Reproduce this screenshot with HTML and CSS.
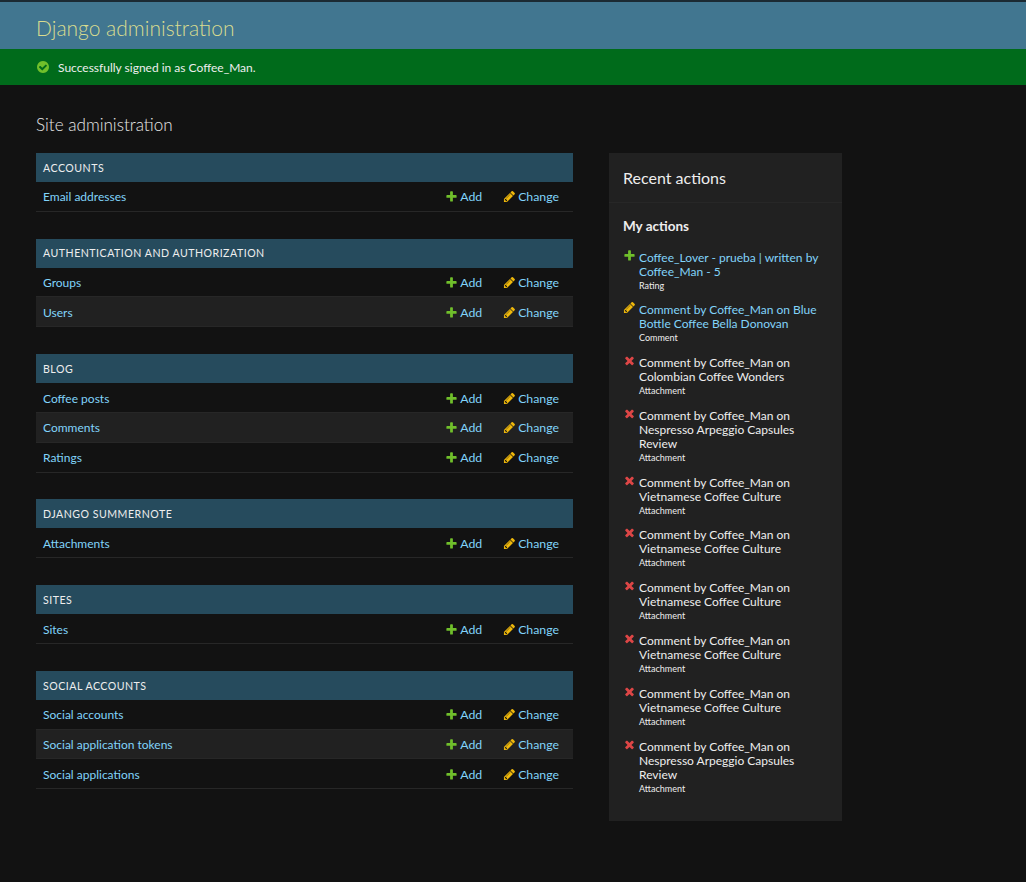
FILE: index.html
```html
<!DOCTYPE html>
<html lang="en">
<head>
    <meta charset="UTF-8">
    <meta name="viewport" content="width=device-width, initial-scale=1.0">
    <title>Site administration</title>
    <link rel="stylesheet" href="styles.css">
</head>
<body>
  <svg class="iconDefs" xmlns="http://www.w3.org/2000/svg">
    <symbol id="iconAdd" viewBox="0 0 1792 1792"><path d="M1600 796v192q0 40-28 68t-68 28h-416v416q0 40-28 68t-68 28h-192q-40 0-68-28t-28-68v-416h-416q-40 0-68-28t-28-68v-192q0-40 28-68t68-28h416v-416q0-40 28-68t68-28h192q40 0 68 28t28 68v416h416q40 0 68 28t28 68z"/></symbol>
    <symbol id="iconChange" viewBox="0 0 1792 1792"><path d="M491 1536l91-91-235-235-91 91v107h128v128h107zm523-928q0-22-22-22-10 0-17 7l-542 542q-7 7-7 17 0 22 22 22 10 0 17-7l542-542q7-7 7-17zm-54-192l416 416-832 832h-416v-416zm683 96q0 53-37 90l-166 166-416-416 166-165q36-38 90-38 53 0 91 38l235 234q37 39 37 91z"/></symbol>
    <symbol id="iconDelete" viewBox="0 0 1792 1792"><path d="M1490 1322q0 40-28 68l-136 136q-28 28-68 28t-68-28l-294-294-294 294q-28 28-68 28t-68-28l-136-136q-28-28-28-68t28-68l294-294-294-294q-28-28-28-68t28-68l136-136q28-28 68-28t68 28l294 294 294-294q28-28 68-28t68 28l136 136q28 28 28 68t-28 68l-294 294 294 294q28 28 28 68z"/></symbol>
    <symbol id="iconOk" viewBox="0 0 1792 1792"><path d="M1412 734q0-28-18-46l-91-90q-19-19-45-19t-45 19l-408 407-226-226q-19-19-45-19t-45 19l-91 90q-18 18-18 46 0 27 18 45l362 362q19 19 45 19 27 0 46-19l543-543q18-18 18-45zm252 162q0 209-103 385.5t-279.5 279.5-385.5 103-385.5-103-279.5-279.5-103-385.5 103-385.5 279.5-279.5 385.5-103 385.5 103 279.5 279.5 103 385.5z"/></symbol>
  </svg>

  <div class="header">
    <div class="branding">Django administration</div>
  </div>
  <div class="message">
    <svg class="icon okIcon"><use href="#iconOk"/></svg>
    <span>Successfully signed in as Coffee_Man.</span>
  </div>

  <div class="content">
    <h1 class="pageTitle">Site administration</h1>
    <div class="columns">
      <div class="appList" id="appList">

        <div class="module">
          <div class="caption">Accounts</div>
          <div class="row"><a class="modelName">Email addresses</a><a class="addLink"><svg class="icon plus"><use href="#iconAdd"/></svg>Add</a><a class="changeLink"><svg class="icon pencil"><use href="#iconChange"/></svg>Change</a></div>
        </div>

        <div class="module">
          <div class="caption">Authentication and Authorization</div>
          <div class="row"><a class="modelName">Groups</a><a class="addLink"><svg class="icon plus"><use href="#iconAdd"/></svg>Add</a><a class="changeLink"><svg class="icon pencil"><use href="#iconChange"/></svg>Change</a></div>
          <div class="row"><a class="modelName">Users</a><a class="addLink"><svg class="icon plus"><use href="#iconAdd"/></svg>Add</a><a class="changeLink"><svg class="icon pencil"><use href="#iconChange"/></svg>Change</a></div>
        </div>

        <div class="module">
          <div class="caption">Blog</div>
          <div class="row"><a class="modelName">Coffee posts</a><a class="addLink"><svg class="icon plus"><use href="#iconAdd"/></svg>Add</a><a class="changeLink"><svg class="icon pencil"><use href="#iconChange"/></svg>Change</a></div>
          <div class="row"><a class="modelName">Comments</a><a class="addLink"><svg class="icon plus"><use href="#iconAdd"/></svg>Add</a><a class="changeLink"><svg class="icon pencil"><use href="#iconChange"/></svg>Change</a></div>
          <div class="row"><a class="modelName">Ratings</a><a class="addLink"><svg class="icon plus"><use href="#iconAdd"/></svg>Add</a><a class="changeLink"><svg class="icon pencil"><use href="#iconChange"/></svg>Change</a></div>
        </div>

        <div class="module">
          <div class="caption">Django Summernote</div>
          <div class="row"><a class="modelName">Attachments</a><a class="addLink"><svg class="icon plus"><use href="#iconAdd"/></svg>Add</a><a class="changeLink"><svg class="icon pencil"><use href="#iconChange"/></svg>Change</a></div>
        </div>

        <div class="module">
          <div class="caption">Sites</div>
          <div class="row"><a class="modelName">Sites</a><a class="addLink"><svg class="icon plus"><use href="#iconAdd"/></svg>Add</a><a class="changeLink"><svg class="icon pencil"><use href="#iconChange"/></svg>Change</a></div>
        </div>

        <div class="module">
          <div class="caption">Social Accounts</div>
          <div class="row"><a class="modelName">Social accounts</a><a class="addLink"><svg class="icon plus"><use href="#iconAdd"/></svg>Add</a><a class="changeLink"><svg class="icon pencil"><use href="#iconChange"/></svg>Change</a></div>
          <div class="row"><a class="modelName">Social application tokens</a><a class="addLink"><svg class="icon plus"><use href="#iconAdd"/></svg>Add</a><a class="changeLink"><svg class="icon pencil"><use href="#iconChange"/></svg>Change</a></div>
          <div class="row"><a class="modelName">Social applications</a><a class="addLink"><svg class="icon plus"><use href="#iconAdd"/></svg>Add</a><a class="changeLink"><svg class="icon pencil"><use href="#iconChange"/></svg>Change</a></div>
        </div>

      </div>

      <div class="sidebar">
        <h2 class="sidebarTitle">Recent actions</h2>
        <div class="sidebarBody">
          <h3 class="sidebarSub">My actions</h3>
          <ul class="actionList">
            <li class="action"><svg class="icon plus"><use href="#iconAdd"/></svg><div><a class="actionLink">Coffee_Lover - prueba | written by Coffee_Man - 5</a><span class="actionType">Rating</span></div></li>
            <li class="action"><svg class="icon pencil"><use href="#iconChange"/></svg><div><a class="actionLink">Comment by Coffee_Man on Blue Bottle Coffee Bella Donovan</a><span class="actionType">Comment</span></div></li>
            <li class="action"><svg class="icon cross"><use href="#iconDelete"/></svg><div>Comment by Coffee_Man on Colombian Coffee Wonders<span class="actionType">Attachment</span></div></li>
            <li class="action"><svg class="icon cross"><use href="#iconDelete"/></svg><div>Comment by Coffee_Man on Nespresso Arpeggio Capsules Review<span class="actionType">Attachment</span></div></li>
            <li class="action"><svg class="icon cross"><use href="#iconDelete"/></svg><div>Comment by Coffee_Man on Vietnamese Coffee Culture<span class="actionType">Attachment</span></div></li>
            <li class="action"><svg class="icon cross"><use href="#iconDelete"/></svg><div>Comment by Coffee_Man on Vietnamese Coffee Culture<span class="actionType">Attachment</span></div></li>
            <li class="action"><svg class="icon cross"><use href="#iconDelete"/></svg><div>Comment by Coffee_Man on Vietnamese Coffee Culture<span class="actionType">Attachment</span></div></li>
            <li class="action"><svg class="icon cross"><use href="#iconDelete"/></svg><div>Comment by Coffee_Man on Vietnamese Coffee Culture<span class="actionType">Attachment</span></div></li>
            <li class="action"><svg class="icon cross"><use href="#iconDelete"/></svg><div>Comment by Coffee_Man on Vietnamese Coffee Culture<span class="actionType">Attachment</span></div></li>
            <li class="action"><svg class="icon cross"><use href="#iconDelete"/></svg><div>Comment by Coffee_Man on Nespresso Arpeggio Capsules Review<span class="actionType">Attachment</span></div></li>
          </ul>
        </div>
      </div>
    </div>
  </div>
</body>
</html>
```

FILE: styles.css
```css
body
{
    margin: 0;
    background: #121212;
    color: #eeeeee;
    font-family: Lato, "Open Sans", sans-serif;
    font-size: 12px;
}
a
{
    color: #81d4fa;
}
.iconDefs
{
    display: none;
}
.icon
{
    display: inline-block;
    flex: none;
    width: 13px;
    height: 13px;
}
.plus
{
    fill: #70bf2b;
}
.pencil
{
    fill: #efb80b;
}
.cross
{
    fill: #dd4646;
}

.header
{
    height: 44px;
    border-top: 2px solid #1b2a33;
    padding: 3px 0 0 36px;
    display: flex;
    align-items: center;
    background: #417690;
}
.branding
{
    color: #d9dc8f;
    font-size: 21px;
    font-weight: 300;
}
.message
{
    height: 36px;
    padding-left: 36px;
    display: flex;
    align-items: center;
    gap: 8px;
    background: #006b1b;
}
.okIcon
{
    fill: #70bf2b;
    width: 14px;
    height: 14px;
}

.content
{
    padding: 0 36px;
}
.pageTitle
{
    margin: 0;
    padding-top: 28px;
    height: 40px;
    font-size: 17.1px;
    line-height: 24px;
    font-weight: 300;
    color: #e6e6e6;
}
.columns
{
    display: flex;
    align-items: flex-start;
    gap: 36px;
}

.appList
{
    width: 537px;
}
.module
{
    margin-bottom: 26.9px;
}
.caption
{
    height: 29px;
    box-sizing: border-box;
    padding: 0.6px 0 0 7px;
    display: flex;
    align-items: center;
    background: #264b5d;
    color: #eeeeee;
    font-size: 10.6px;
    letter-spacing: 0.5px;
    text-transform: uppercase;
}
.row
{
    height: 29.8px;
    box-sizing: border-box;
    padding: 1px 14px 0 7px;
    display: flex;
    align-items: center;
    border-bottom: 1px solid #272727;
}
.row:nth-child(odd)
{
    background: #212121;
}
.modelName
{
    flex: 1;
}
.addLink
{
    display: flex;
    align-items: center;
    gap: 2px;
    margin-right: 21px;
    font-size: 12.3px;
}
.changeLink
{
    display: flex;
    align-items: center;
    gap: 2px;
    font-size: 12.3px;
}

.sidebar
{
    width: 233px;
    height: 668px;
    background: #212121;
}
.sidebarTitle
{
    margin: 0;
    padding: 0 14px;
    height: 49px;
    line-height: 50px;
    font-size: 16px;
    font-weight: 400;
    border-bottom: 1px solid #272727;
}
.sidebarSub
{
    margin: 0;
    padding: 13px 14px 0;
    font-size: 13.5px;
    line-height: 20px;
    font-weight: 700;
}
.actionList
{
    list-style: none;
    margin: 0;
    padding: 14.5px 14px 0;
}
.action
{
    display: flex;
    gap: 3px;
    margin-bottom: 10.8px;
    line-height: 14px;
}
.action .icon
{
    margin-top: -2px;
}
.actionType
{
    display: block;
    font-size: 9px;
    line-height: 14px;
}
```
